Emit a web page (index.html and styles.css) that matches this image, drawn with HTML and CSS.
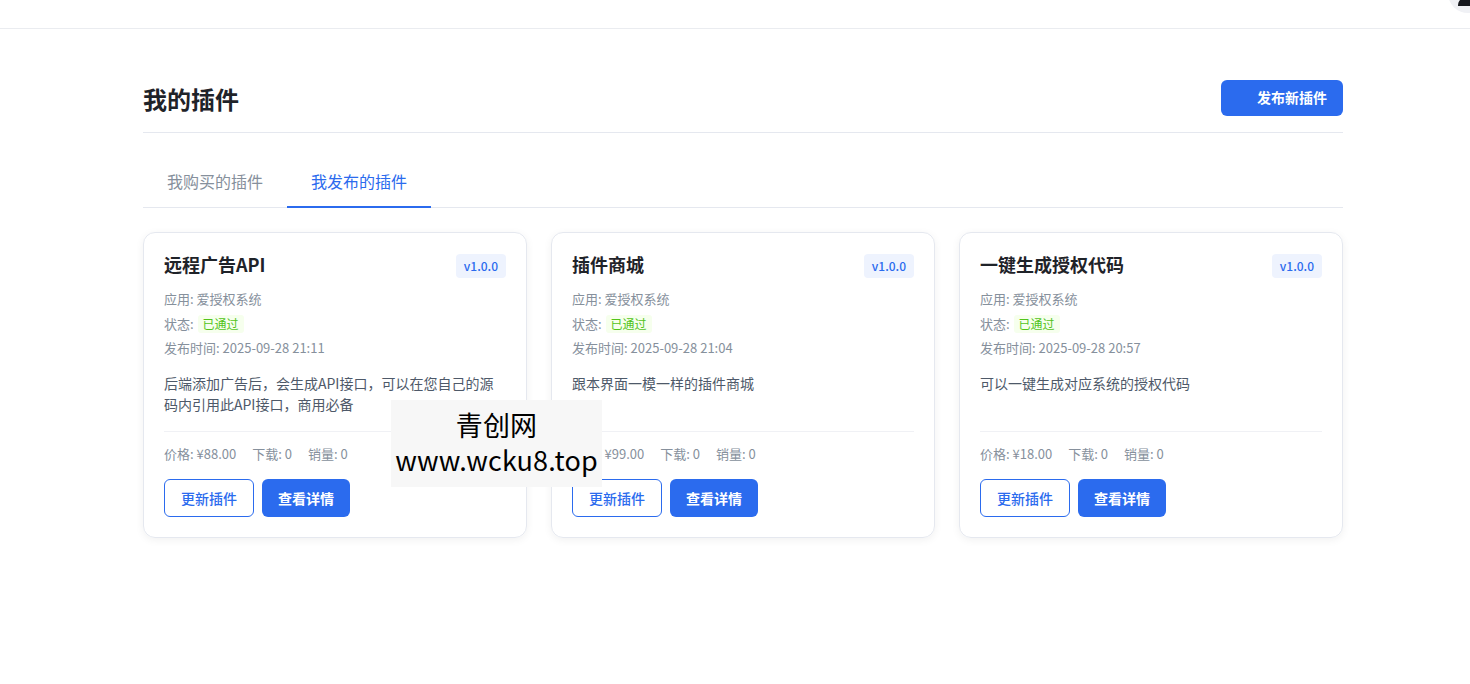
FILE: index.html
```html
<!DOCTYPE html>
<html lang="zh-CN">
<head>
    <meta charset="UTF-8">
    <meta name="viewport" content="width=device-width, initial-scale=1.0">
    <title>我的插件</title>
    <link rel="stylesheet" href="styles.css">
</head>
<body>
    <header class="topbar">
        <div class="avatar">
            <svg viewBox="0 0 24 24" width="24" height="24"><circle cx="12" cy="7" r="5"/><path d="M2 24c0-6 4-9 10-9s10 3 10 9z"/></svg>
        </div>
    </header>
    <main class="container">
        <div class="page-head">
            <h1 class="page-title">我的插件</h1>
            <button class="btn-new"><span class="btn-icon"></span>发布新插件</button>
        </div>
        <nav class="tabs">
            <a class="tab">我购买的插件</a>
            <a class="tab active">我发布的插件</a>
        </nav>
        <section class="cards">
            <article class="card">
                <div class="card-head">
                    <h3 class="card-title">远程广告API</h3>
                    <span class="version">v1.0.0</span>
                </div>
                <p class="meta">应用: 爱授权系统</p>
                <p class="meta">状态: <span class="status">已通过</span></p>
                <p class="meta">发布时间: 2025-09-28 21:11</p>
                <p class="desc">后端添加广告后，会生成API接口，可以在您自己的源码内引用此API接口，商用必备</p>
                <div class="stats"><span>价格: ¥88.00</span><span>下载: 0</span><span>销量: 0</span></div>
                <div class="actions"><button class="btn btn-outline">更新插件</button><button class="btn btn-fill">查看详情</button></div>
            </article>
            <article class="card">
                <div class="card-head">
                    <h3 class="card-title">插件商城</h3>
                    <span class="version">v1.0.0</span>
                </div>
                <p class="meta">应用: 爱授权系统</p>
                <p class="meta">状态: <span class="status">已通过</span></p>
                <p class="meta">发布时间: 2025-09-28 21:04</p>
                <p class="desc">跟本界面一模一样的插件商城</p>
                <div class="stats"><span>价格: ¥99.00</span><span>下载: 0</span><span>销量: 0</span></div>
                <div class="actions"><button class="btn btn-outline">更新插件</button><button class="btn btn-fill">查看详情</button></div>
            </article>
            <article class="card">
                <div class="card-head">
                    <h3 class="card-title">一键生成授权代码</h3>
                    <span class="version">v1.0.0</span>
                </div>
                <p class="meta">应用: 爱授权系统</p>
                <p class="meta">状态: <span class="status">已通过</span></p>
                <p class="meta">发布时间: 2025-09-28 20:57</p>
                <p class="desc">可以一键生成对应系统的授权代码</p>
                <div class="stats"><span>价格: ¥18.00</span><span>下载: 0</span><span>销量: 0</span></div>
                <div class="actions"><button class="btn btn-outline">更新插件</button><button class="btn btn-fill">查看详情</button></div>
            </article>
        </section>
    </main>
    <div class="watermark">青创网<br>www.wcku8.top</div>
</body>
</html>
```

FILE: styles.css
```css
:root{
    --blue: #2b6bee;
    --dark: #1f2329;
    --grey: #86909c;
    --text: #4e5969;
    --line: #e5e8ef;
}
*,*::before,*::after{
    box-sizing: border-box;
    margin: 0;
    padding: 0;
}
html,body{
    height: 684px;
    overflow: hidden;
}
body{
    font-family: "Noto Sans CJK SC", "Noto Sans", sans-serif;
    background-color: #fff;
    color: var(--dark);
}
.topbar{
    height: 29px;
    border-bottom: 1px solid #eaecf0;
    overflow: hidden;
    position: relative;
}
.avatar{
    position: absolute;
    left: 1448px;
    top: -27px;
    width: 40px;
    height: 40px;
    border-radius: 50%;
    background-color: #f0f1f5;
    display: flex;
    align-items: flex-end;
    justify-content: center;
    padding-bottom: 7px;
}
.avatar svg{
    fill: #16181d;
}
.container{
    width: 1200px;
    margin-left: 143px;
    padding-top: 51px;
}
.page-head{
    display: flex;
    justify-content: space-between;
    align-items: flex-start;
    height: 53px;
    border-bottom: 1px solid var(--line);
}
.page-title{
    font-size: 24px;
    font-weight: 700;
    line-height: 38px;
}
.btn-new{
    width: 122px;
    height: 36px;
    border: none;
    border-radius: 6px;
    background-color: var(--blue);
    color: #fff;
    font-family: inherit;
    font-size: 14px;
    font-weight: 700;
    line-height: 34px;
    display: flex;
    align-items: flex-start;
    justify-content: flex-end;
    padding-right: 16px;
}
.tabs{
    display: flex;
    margin-top: 27px;
    height: 48px;
    border-bottom: 1px solid var(--line);
}
.tab{
    width: 144px;
    height: 48px;
    text-align: center;
    font-size: 16px;
    line-height: 42px;
    color: var(--grey);
}
.tab.active{
    color: var(--blue);
    border-bottom: 2px solid var(--blue);
}
.cards{
    display: grid;
    grid-template-columns: repeat(3, 384px);
    gap: 24px;
    margin-top: 24px;
}
.card{
    height: 306px;
    border: 1px solid var(--line);
    border-radius: 12px;
    padding: 20px;
    box-shadow: 0 2px 8px rgba(0, 0, 0, 0.06);
    display: flex;
    flex-direction: column;
}
.card-head{
    display: flex;
    justify-content: space-between;
    align-items: center;
    height: 24px;
    margin-bottom: 10px;
}
.card-title{
    font-size: 18px;
    font-weight: 700;
    line-height: 24px;
    margin-bottom: 2px;
}
.version{
    font-size: 12px;
    font-weight: 500;
    line-height: 24px;
    padding: 0 8px;
    margin-top: 2px;
    border-radius: 4px;
    color: var(--blue);
    background-color: #eef3fe;
}
.meta{
    font-size: 13px;
    line-height: 24px;
    color: var(--grey);
}
.meta:first-of-type{
    margin-bottom: 1px;
}
.status{
    display: inline-block;
    font-size: 12px;
    line-height: 18px;
    padding: 0 5px;
    margin-left: 1px;
    border-radius: 3px;
    color: #52c41a;
    background-color: #f6ffed;
}
.desc{
    margin-top: 13px;
    height: 55px;
    font-size: 14px;
    line-height: 21px;
    color: var(--text);
}
.stats{
    display: flex;
    gap: 16px;
    margin-top: 3px;
    padding-top: 12px;
    border-top: 1px solid #f0f1f5;
    font-size: 13px;
    line-height: 20px;
    color: var(--grey);
}
.actions{
    display: flex;
    gap: 8px;
    margin-top: 15px;
}
.btn{
    height: 38px;
    border-radius: 6px;
    font-family: inherit;
    font-size: 14px;
    font-weight: 500;
}
.btn-outline{
    width: 90px;
    border: 1px solid var(--blue);
    background-color: #fff;
    color: var(--blue);
}
.btn-fill{
    width: 88px;
    border: none;
    background-color: var(--blue);
    color: #fff;
    font-weight: 700;
}
.watermark{
    position: absolute;
    left: 391px;
    top: 400px;
    width: 211px;
    height: 87px;
    background-color: #f7f7f7;
    color: #000;
    text-align: center;
    font-size: 27px;
    letter-spacing: 0.15px;
    line-height: 35px;
    padding-top: 7px;
    white-space: nowrap;
}
```
